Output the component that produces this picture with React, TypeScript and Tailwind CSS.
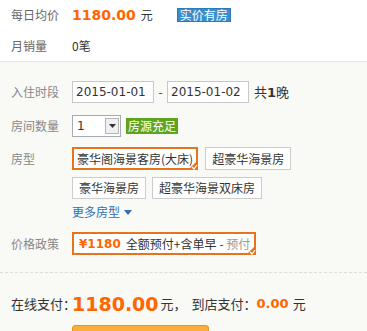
import React from "react";

const cjk = { fontFamily: '"Noto Sans CJK SC", "Liberation Sans", sans-serif' };
const num = { fontFamily: '"DejaVu Sans", "Noto Sans CJK SC", sans-serif' };

function Corner() {
  return (
    <svg className="absolute right-[-2px] bottom-[-2px]" width="10" height="10" viewBox="0 0 10 10">
      <polygon points="10,0 10,10 0,10" fill="#e8731e" />
      <polyline points="4,7 6,9 9,5" fill="none" stroke="#fff" strokeWidth="1.2" />
    </svg>
  );
}

export default function App() {
  return (
    <div className="w-[367px] h-[331px] overflow-hidden bg-[#f9f9f6] text-[12px] text-[#333]" style={cjk}>
      <div className="bg-white border-b border-[#e6e6e6] px-[11px]">
        <div className="flex items-center h-[30px]">
          <span className="w-[61px] text-[#666]">每日均价</span>
          <span className="text-[#f60] font-bold text-[14px]" style={num}>1180.00</span>
          <span className="ml-[5px]">元</span>
          <span className="ml-[24px] bg-[#3a8ccb] text-white px-[2px] leading-[14px] h-[14px] flex items-center border border-[#2f7ab5]">实价有房</span>
        </div>
        <div className="flex items-center h-[31px]">
          <span className="w-[61px] text-[#666]">月销量</span>
          <span>0笔</span>
        </div>
      </div>

      <div className="px-[11px] pt-[19px]">
        <div className="flex items-center h-[22px]">
          <span className="w-[61px] text-[#888]">入住时段</span>
          <div className="w-[82px] h-[22px] bg-white border border-[#c8c8c8] flex items-center pl-[3px]" style={num}>2015-01-01</div>
          <span className="w-[13px] text-center">-</span>
          <div className="w-[82px] h-[22px] bg-white border border-[#c8c8c8] flex items-center pl-[3px]" style={num}>2015-01-02</div>
          <span className="ml-[5px] text-[13px]">共<b style={num}>1</b>晚</span>
        </div>

        <div className="flex items-center h-[22px] mt-[12px]">
          <span className="w-[61px] text-[#888]">房间数量</span>
          <div className="w-[49px] h-[22px] bg-white border border-[#a5acb5] flex items-center justify-between pl-[4px] pr-[1px]">
            <span style={num}>1</span>
            <span className="w-[14px] h-[16px] border border-[#b5b5b5] bg-[#f0f0f0] flex items-center justify-center">
              <svg width="7" height="4" viewBox="0 0 7 4"><polygon points="0,0 7,0 3.5,4" fill="#333" /></svg>
            </span>
          </div>
          <span className="ml-[5px] bg-[#5da51e] text-white px-[2px] h-[16px] leading-[16px]">房源充足</span>
        </div>

        <div className="flex mt-[10px]">
          <span className="w-[61px] text-[#888] pt-[3px]">房型</span>
          <div className="flex flex-col">
            <div className="flex gap-[7px]">
              <div className="relative h-[23px] border-2 border-[#e8731e] bg-white px-[3px] flex items-center whitespace-nowrap">豪华阁海景客房(大床)<Corner /></div>
              <div className="h-[23px] border border-[#ccc] bg-white px-[6px] flex items-center">超豪华海景房</div>
            </div>
            <div className="flex gap-[6px] mt-[7px]">
              <div className="h-[22px] border border-[#ccc] bg-white px-[6px] flex items-center">豪华海景房</div>
              <div className="h-[22px] border border-[#ccc] bg-white px-[6px] flex items-center">超豪华海景双床房</div>
            </div>
            <div className="flex items-center h-[14px] mt-[6px] text-[#2f6fb5]">
              更多房型
              <svg className="ml-[4px]" width="8" height="5" viewBox="0 0 8 5"><polygon points="0,0 8,0 4,5" fill="#2f6fb5" /></svg>
            </div>
          </div>
        </div>

        <div className="flex items-center mt-[13px]">
          <span className="w-[61px] text-[#888]">价格政策</span>
          <div className="relative h-[23px] w-[184px] border-2 border-[#e8731e] bg-white pl-[5px] flex items-center whitespace-nowrap">
            <span className="text-[#f60] font-bold" style={num}>¥1180</span>
            <span className="ml-[5px]">全额预付+含单早</span>
            <span className="ml-[3px] text-[#999]"><span className="text-[#333]">-</span> 预付</span>
            <Corner />
          </div>
        </div>
      </div>

      <div className="mt-[17px] border-t border-dashed border-[#dcdcdc]" />

      <div className="px-[11px] flex items-center h-[30px] mt-[16px] text-[13px] whitespace-nowrap">
        <span className="w-[61px]">在线支付：</span>
        <span className="text-[#f60] font-bold text-[19px]" style={num}>1180.00</span>
        <span className="ml-[2px]">元，</span>
        <span className="ml-[5px]">到店支付：</span>
        <span className="text-[#f60] font-bold text-[13px]" style={num}>0.00</span>
        <span className="ml-[4px]">元</span>
      </div>
      <div className="mt-[6px] pl-[72px]">
        <div className="w-[137px] h-[30px] rounded-[3px] border border-[#e8951e] bg-[#fbae3c]" />
      </div>
    </div>
  );
}
